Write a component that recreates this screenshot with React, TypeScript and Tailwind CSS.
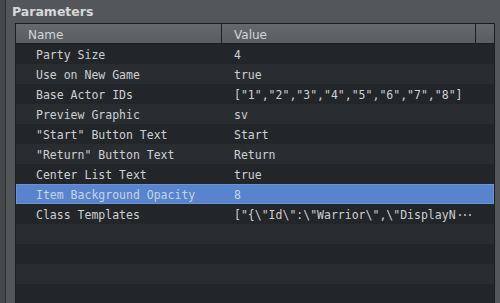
const params = [
  { name: "Party Size", value: "4" },
  { name: "Use on New Game", value: "true" },
  { name: "Base Actor IDs", value: '["1","2","3","4","5","6","7","8"]' },
  { name: "Preview Graphic", value: "sv" },
  { name: '"Start" Button Text', value: "Start" },
  { name: '"Return" Button Text', value: "Return" },
  { name: "Center List Text", value: "true" },
  { name: "Item Background Opacity", value: "8", selected: true },
  { name: "Class Templates", value: '["{\\"Id\\":\\"Warrior\\",\\"DisplayN', more: true },
  { name: "", value: "" },
  { name: "", value: "" },
  { name: "", value: "" },
  { name: "", value: "" },
];

export default function App() {
  return (
    <div className="w-[500px] h-[303px] overflow-hidden flex bg-[#54575a]">
      <div className="w-[5px] shrink-0 bg-[#45484b]" />
      <div className="w-px shrink-0 bg-[#2f3235]" />
      <div className="flex-1 flex flex-col min-w-0">
        <div className="h-[23px] shrink-0 pl-[6px] pt-[1px] flex items-center font-['DejaVu_Sans',sans-serif] font-bold text-[12.5px] text-[#d6d8da]">
          Parameters
        </div>
        <div className="ml-[9px] mr-[5px] flex-1 flex flex-col border-x border-t border-[#1c1f22] bg-[#25282b] min-h-0">
          {/* header */}
          <div className="h-[20px] shrink-0 flex border-b border-[#1c1f22] bg-gradient-to-b from-[#65696c] to-[#5a5e61] font-['DejaVu_Sans',sans-serif] text-[12px] text-[#d2d4d6]">
            <div className="w-[206px] shrink-0 pl-[12px] pt-[2px] flex items-center border-r border-[#1c1f22]">Name</div>
            <div className="w-[254px] shrink-0 pl-[12px] pt-[2px] flex items-center border-r border-[#1c1f22]">Value</div>
            <div className="flex-1" />
          </div>
          {/* rows */}
          <div className="flex flex-col font-['DejaVu_Sans_Mono',monospace] text-[11.5px]">
            {params.map((p, i) =>
              p.selected ? (
                <div
                  key={i}
                  className="h-[20px] shrink-0 flex items-center pt-[4px] bg-[#5784cc] border border-[#6b92d6] text-[#c8d3ea] whitespace-pre"
                >
                  <div className="w-[205px] shrink-0 pl-[19px]">{p.name}</div>
                  <div className="pl-[12px]">{p.value}</div>
                </div>
              ) : (
                <div
                  key={i}
                  className={`h-[20px] shrink-0 flex items-center pt-[4px] text-[#cdd0d3] whitespace-pre ${
                    i % 2 === 0 ? "bg-[#232629]" : "bg-[#2a2d30]"
                  }`}
                >
                  <div className="w-[207px] shrink-0 pl-[20px]">{p.name}</div>
                  <div className="pl-[11px] overflow-hidden">
                    {p.value}
                    {p.more && <span className="tracking-[-2px] pl-[1px]">···</span>}
                  </div>
                </div>
              )
            )}
          </div>
        </div>
      </div>
    </div>
  );
}
